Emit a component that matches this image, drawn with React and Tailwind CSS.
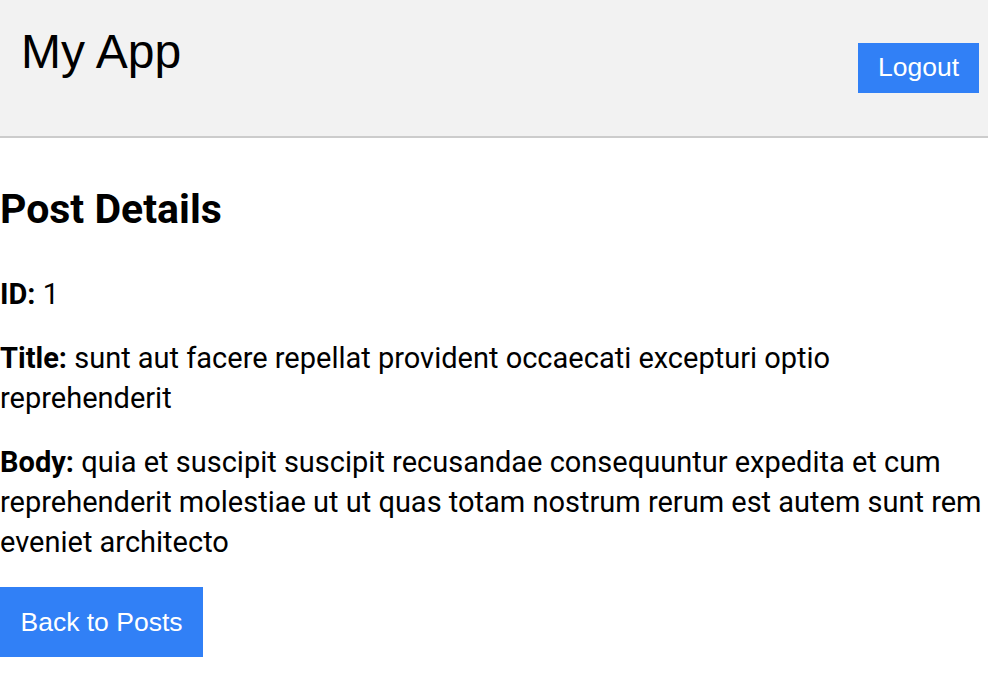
import React from "react";

const post = {
  id: 1,
  title: "sunt aut facere repellat provident occaecati excepturi optio reprehenderit",
  body: "quia et suscipit suscipit recusandae consequuntur expedita et cum reprehenderit molestiae ut ut quas totam nostrum rerum est autem sunt rem eveniet architecto",
};

const App = () => {
  return (
    <div className="min-h-[690px] bg-white text-black">
      {/* Header */}
      <header className="flex justify-between items-start h-[138px] bg-[#f2f2f2] border-b-2 border-[#cccccc] pl-[21px] pr-[9px] font-['Liberation_Sans',Arial,sans-serif]">
        <h1 className="text-[48px] leading-none mt-[28px]">My App</h1>
        <button className="mt-[43px] h-[50px] w-[121px] bg-[#3180f6] text-white text-[26.5px]">
          Logout
        </button>
      </header>

      {/* Post */}
      <main className="font-['Roboto',sans-serif] text-[29px] leading-[40px]">
        <h2 className="text-[41px] font-bold leading-[46px] mt-[48px] mb-[42px]">
          Post Details
        </h2>
        <p className="mb-[24px]">
          <strong className="font-bold">ID:</strong> {post.id}
        </p>
        <p className="mb-[24px]">
          <strong className="font-bold">Title:</strong> {post.title}
        </p>
        <p className="mb-[25px]">
          <strong className="font-bold">Body:</strong> {post.body}
        </p>
        <button className="h-[70px] w-[203px] bg-[#3180f6] text-white text-[26.5px] font-['Liberation_Sans',Arial,sans-serif]">
          Back to Posts
        </button>
      </main>
    </div>
  );
};

export default App;
